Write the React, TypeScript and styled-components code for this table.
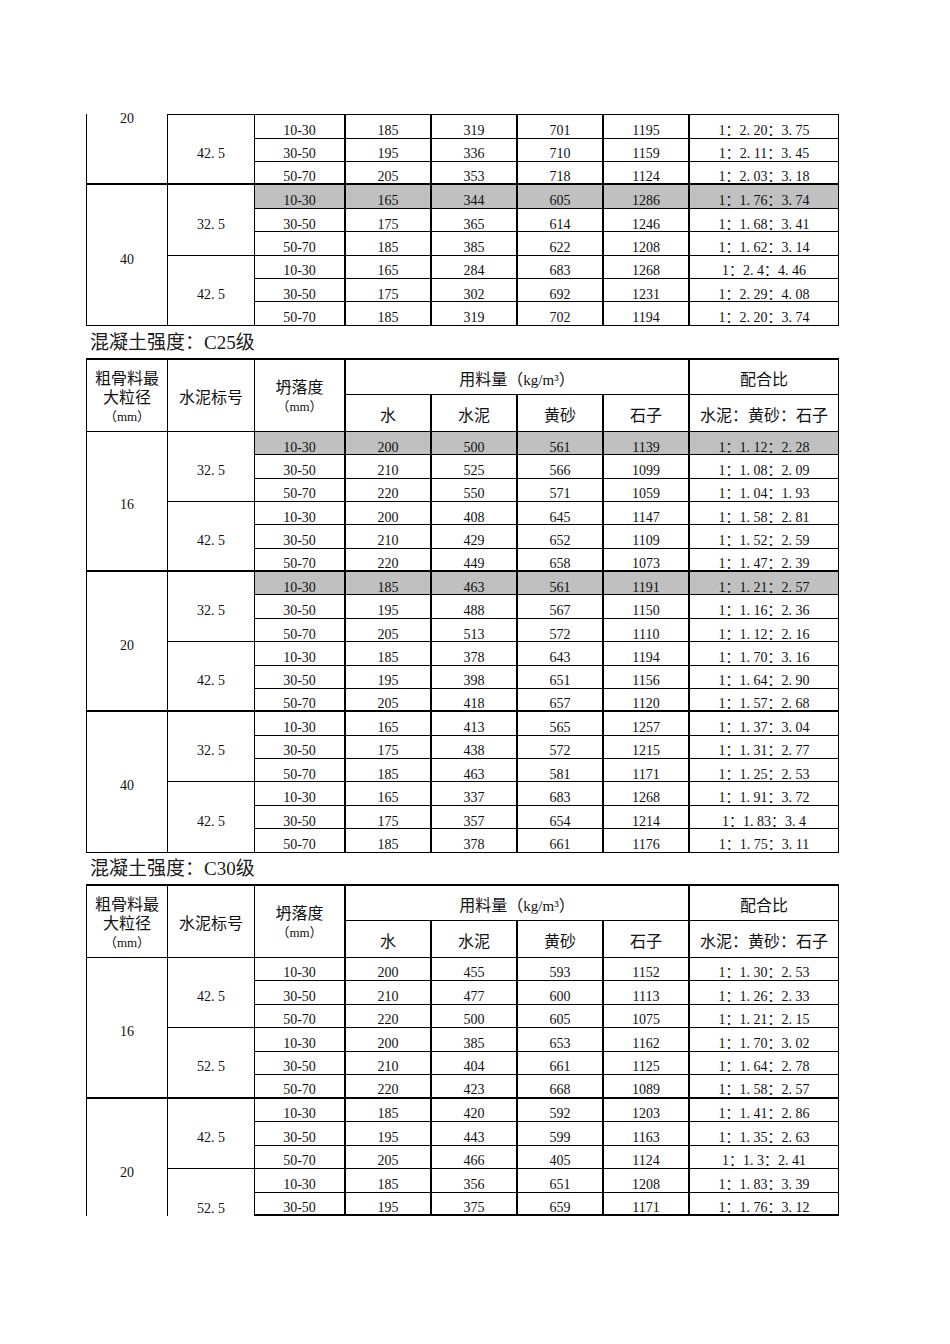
import React from "react";
import styled, { createGlobalStyle } from "styled-components";

const GlobalStyle = createGlobalStyle`
  html, body { margin: 0; padding: 0; background: #fff; }
  body { font-family: "Liberation Serif", "Noto Sans CJK SC", serif; color: #111; }
`;

type Row = { v: string[]; shade?: boolean };
type Sub = { grade: string; rows: Row[]; pt?: number };
type Group = { size: string; subs: Sub[]; contTop?: boolean; cutBottom?: boolean; pt?: number };

const RIGHT = [1, 1, 2, 2, 2, 2, 2, 1];
const COLS = "81px 87px 91px 86px 86px 86px 86px 149px";

const Page = styled.div`
  width: 950px;
  min-height: 1344px;
  box-sizing: border-box;
  padding: 114px 0 0 86px;
  background: #fff;
`;

const Sheet = styled.div`
  width: 753px;
  display: flex;
  flex-direction: column;
`;

const Title = styled.div<{ $h: number }>`
  height: ${(p) => p.$h}px;
  line-height: ${(p) => p.$h + 1}px;
  padding-left: 4px;
  font-size: 19px;
  color: #1a1a1a;
  white-space: nowrap;
`;

const Grid = styled.div<{ $rows: string; $top: number }>`
  display: grid;
  grid-template-columns: ${COLS};
  grid-template-rows: ${(p) => p.$rows};
  border-left: 1px solid #000;
  border-top: ${(p) => p.$top}px solid #000;
`;

type CellProps = {
  $c: number;
  $r: number;
  $span?: number;
  $cspan?: number;
  $bb?: number;
  $bt?: number;
  $shade?: boolean;
  $pt?: number;
  $lh?: number;
};

const Cell = styled.div<CellProps>`
  grid-column: ${(p) => p.$c} / span ${(p) => p.$cspan ?? 1};
  grid-row: ${(p) => p.$r} / span ${(p) => p.$span ?? 1};
  box-sizing: border-box;
  min-width: 0;
  border-right: ${(p) => RIGHT[p.$c + (p.$cspan ?? 1) - 2]}px solid #000;
  border-bottom: ${(p) => p.$bb ?? 1}px solid #000;
  border-top: ${(p) => p.$bt ?? 0}px solid #000;
  background: ${(p) => (p.$shade ? "#c0c0c0" : "#fff")};
  display: flex;
  justify-content: center;
  align-items: ${(p) => (p.$pt !== undefined ? "flex-start" : "center")};
  padding-top: ${(p) => p.$pt ?? 9}px;
  font-size: 14px;
  line-height: ${(p) => p.$lh ?? 16}px;
  white-space: nowrap;
  color: #111;
`;

const DataCell = styled(Cell)``;
const GroupCell = styled(Cell)``;

const HeadCell = styled(Cell)`
  padding-top: 6px;
  align-items: center;
  font-size: 16px;
  line-height: 19px;
  text-align: center;
  white-space: normal;
  flex-direction: column;
`;

const SpanHeadCell = styled(HeadCell)`
  padding-top: 4px;
`;

const HeadLine = styled.span`
  display: block;
  white-space: nowrap;
`;

const Unit = styled.span`
  display: block;
  font-size: 13px;
  line-height: 19px;
  white-space: nowrap;
`;

const KgUnit = styled.span`
  font-size: 15px;
`;

const Dot = styled.span`
  display: inline-block;
  width: 0.5em;
  text-align: left;
`;

const num = (s: string) =>
  s.split(".").flatMap((part, i) =>
    i === 0 ? [part] : [<Dot key={i}>.</Dot>, part]
  );

const r = (v: string, shade?: boolean): Row => ({ v: v.split(" "), shade });

const Header = () => (
  <>
    <SpanHeadCell $c={1} $r={1} $span={2}>
      <HeadLine>粗骨料最</HeadLine>
      <HeadLine>大粒径</HeadLine>
      <Unit>（mm）</Unit>
    </SpanHeadCell>
    <SpanHeadCell $c={2} $r={1} $span={2}>
      <HeadLine>水泥标号</HeadLine>
    </SpanHeadCell>
    <SpanHeadCell $c={3} $r={1} $span={2}>
      <HeadLine>坍落度</HeadLine>
      <Unit>（mm）</Unit>
    </SpanHeadCell>
    <HeadCell $c={4} $r={1} $cspan={4}>
      <HeadLine>
        用料量（<KgUnit>kg/m³</KgUnit>）
      </HeadLine>
    </HeadCell>
    <HeadCell $c={8} $r={1}>
      <HeadLine>配合比</HeadLine>
    </HeadCell>
    {["水", "水泥", "黄砂", "石子", "水泥：黄砂：石子"].map((t, i) => (
      <HeadCell key={t} $c={4 + i} $r={2}>
        <HeadLine>{t}</HeadLine>
      </HeadCell>
    ))}
  </>
);

const Body = ({ groups, start, openTop }: { groups: Group[]; start: number; openTop?: boolean }) => {
  const out: React.ReactNode[] = [];
  let row = start;
  groups.forEach((g, gi) => {
    const total = g.subs.reduce((n, s) => n + s.rows.length, 0);
    const lastGroup = gi === groups.length - 1;
    const groupBottom = g.cutBottom ? 0 : lastGroup ? 1 : 2;
    const dataEnd = g.cutBottom ? 2 : lastGroup ? 1 : 2;
    out.push(
      <GroupCell
        key={`g${gi}`}
        $c={1}
        $r={row}
        $span={total}
        $bb={groupBottom}
        $pt={g.contTop ? 0 : g.pt}
        $lh={g.contTop ? 10 : 16}
      >
        {num(g.size)}
      </GroupCell>
    );
    let sr = row;
    g.subs.forEach((s, si) => {
      const lastSub = si === g.subs.length - 1;
      const firstOpen = openTop && gi === 0 && si === 0;
      out.push(
        <GroupCell
          key={`s${gi}-${si}`}
          $c={2}
          $r={sr}
          $span={s.rows.length}
          $bb={lastSub ? groupBottom : 1}
          $bt={firstOpen ? 1 : 0}
          $pt={s.pt}
        >
          {num(s.grade)}
        </GroupCell>
      );
      s.rows.forEach((rw, ri) => {
        const lastRow = lastSub && ri === s.rows.length - 1;
        rw.v.forEach((v, vi) =>
          out.push(
            <DataCell
              key={`d${gi}-${si}-${ri}-${vi}`}
              $c={3 + vi}
              $r={sr + ri}
              $bb={lastRow ? dataEnd : 1}
              $bt={firstOpen && ri === 0 ? 1 : 0}
              $shade={rw.shade}
            >
              {num(v)}
            </DataCell>
          )
        );
      });
      sr += s.rows.length;
    });
    row += total;
  });
  return <>{out}</>;
};

const part1: Group[] = [
  {
    size: "20",
    contTop: true,
    subs: [
      {
        grade: "42.5",
        rows: [
          r("10-30 185 319 701 1195 1：2.20：3.75"),
          r("30-50 195 336 710 1159 1：2.11：3.45"),
          r("50-70 205 353 718 1124 1：2.03：3.18"),
        ],
      },
    ],
  },
  {
    size: "40",
    subs: [
      {
        grade: "32.5",
        rows: [
          r("10-30 165 344 605 1286 1：1.76：3.74", true),
          r("30-50 175 365 614 1246 1：1.68：3.41"),
          r("50-70 185 385 622 1208 1：1.62：3.14"),
        ],
      },
      {
        grade: "42.5",
        rows: [
          r("10-30 165 284 683 1268 1：2.4：4.46"),
          r("30-50 175 302 692 1231 1：2.29：4.08"),
          r("50-70 185 319 702 1194 1：2.20：3.74"),
        ],
      },
    ],
  },
];

const c25: Group[] = [
  {
    size: "16",
    subs: [
      {
        grade: "32.5",
        rows: [
          r("10-30 200 500 561 1139 1：1.12：2.28", true),
          r("30-50 210 525 566 1099 1：1.08：2.09"),
          r("50-70 220 550 571 1059 1：1.04：1.93"),
        ],
      },
      {
        grade: "42.5",
        rows: [
          r("10-30 200 408 645 1147 1：1.58：2.81"),
          r("30-50 210 429 652 1109 1：1.52：2.59"),
          r("50-70 220 449 658 1073 1：1.47：2.39"),
        ],
      },
    ],
  },
  {
    size: "20",
    subs: [
      {
        grade: "32.5",
        rows: [
          r("10-30 185 463 561 1191 1：1.21：2.57", true),
          r("30-50 195 488 567 1150 1：1.16：2.36"),
          r("50-70 205 513 572 1110 1：1.12：2.16"),
        ],
      },
      {
        grade: "42.5",
        rows: [
          r("10-30 185 378 643 1194 1：1.70：3.16"),
          r("30-50 195 398 651 1156 1：1.64：2.90"),
          r("50-70 205 418 657 1120 1：1.57：2.68"),
        ],
      },
    ],
  },
  {
    size: "40",
    subs: [
      {
        grade: "32.5",
        rows: [
          r("10-30 165 413 565 1257 1：1.37：3.04"),
          r("30-50 175 438 572 1215 1：1.31：2.77"),
          r("50-70 185 463 581 1171 1：1.25：2.53"),
        ],
      },
      {
        grade: "42.5",
        rows: [
          r("10-30 165 337 683 1268 1：1.91：3.72"),
          r("30-50 175 357 654 1214 1：1.83：3.4"),
          r("50-70 185 378 661 1176 1：1.75：3.11"),
        ],
      },
    ],
  },
];

const c30: Group[] = [
  {
    size: "16",
    subs: [
      {
        grade: "42.5",
        rows: [
          r("10-30 200 455 593 1152 1：1.30：2.53"),
          r("30-50 210 477 600 1113 1：1.26：2.33"),
          r("50-70 220 500 605 1075 1：1.21：2.15"),
        ],
      },
      {
        grade: "52.5",
        rows: [
          r("10-30 200 385 653 1162 1：1.70：3.02"),
          r("30-50 210 404 661 1125 1：1.64：2.78"),
          r("50-70 220 423 668 1089 1：1.58：2.57"),
        ],
      },
    ],
  },
  {
    size: "20",
    cutBottom: true,
    pt: 66,
    subs: [
      {
        grade: "42.5",
        rows: [
          r("10-30 185 420 592 1203 1：1.41：2.86"),
          r("30-50 195 443 599 1163 1：1.35：2.63"),
          r("50-70 205 466 405 1124 1：1.3：2.41"),
        ],
      },
      {
        grade: "52.5",
        pt: 32,
        rows: [
          r("10-30 185 356 651 1208 1：1.83：3.39"),
          r("30-50 195 375 659 1171 1：1.76：3.12"),
        ],
      },
    ],
  },
];

export default function App() {
  return (
    <>
      <GlobalStyle />
      <Page>
        <Sheet>
          <Grid $rows="24.6px repeat(8, 23.42px)" $top={0}>
            <Body groups={part1} start={1} openTop />
          </Grid>
          <Title $h={32}>混凝土强度：C25级</Title>
          <Grid $rows="35px 37px repeat(18, 23.39px)" $top={2}>
            <Header />
            <Body groups={c25} start={3} />
          </Grid>
          <Title $h={31}>混凝土强度：C30级</Title>
          <Grid $rows="35px 37px repeat(11, 23.5px)" $top={2}>
            <Header />
            <Body groups={c30} start={3} />
          </Grid>
        </Sheet>
      </Page>
    </>
  );
}
